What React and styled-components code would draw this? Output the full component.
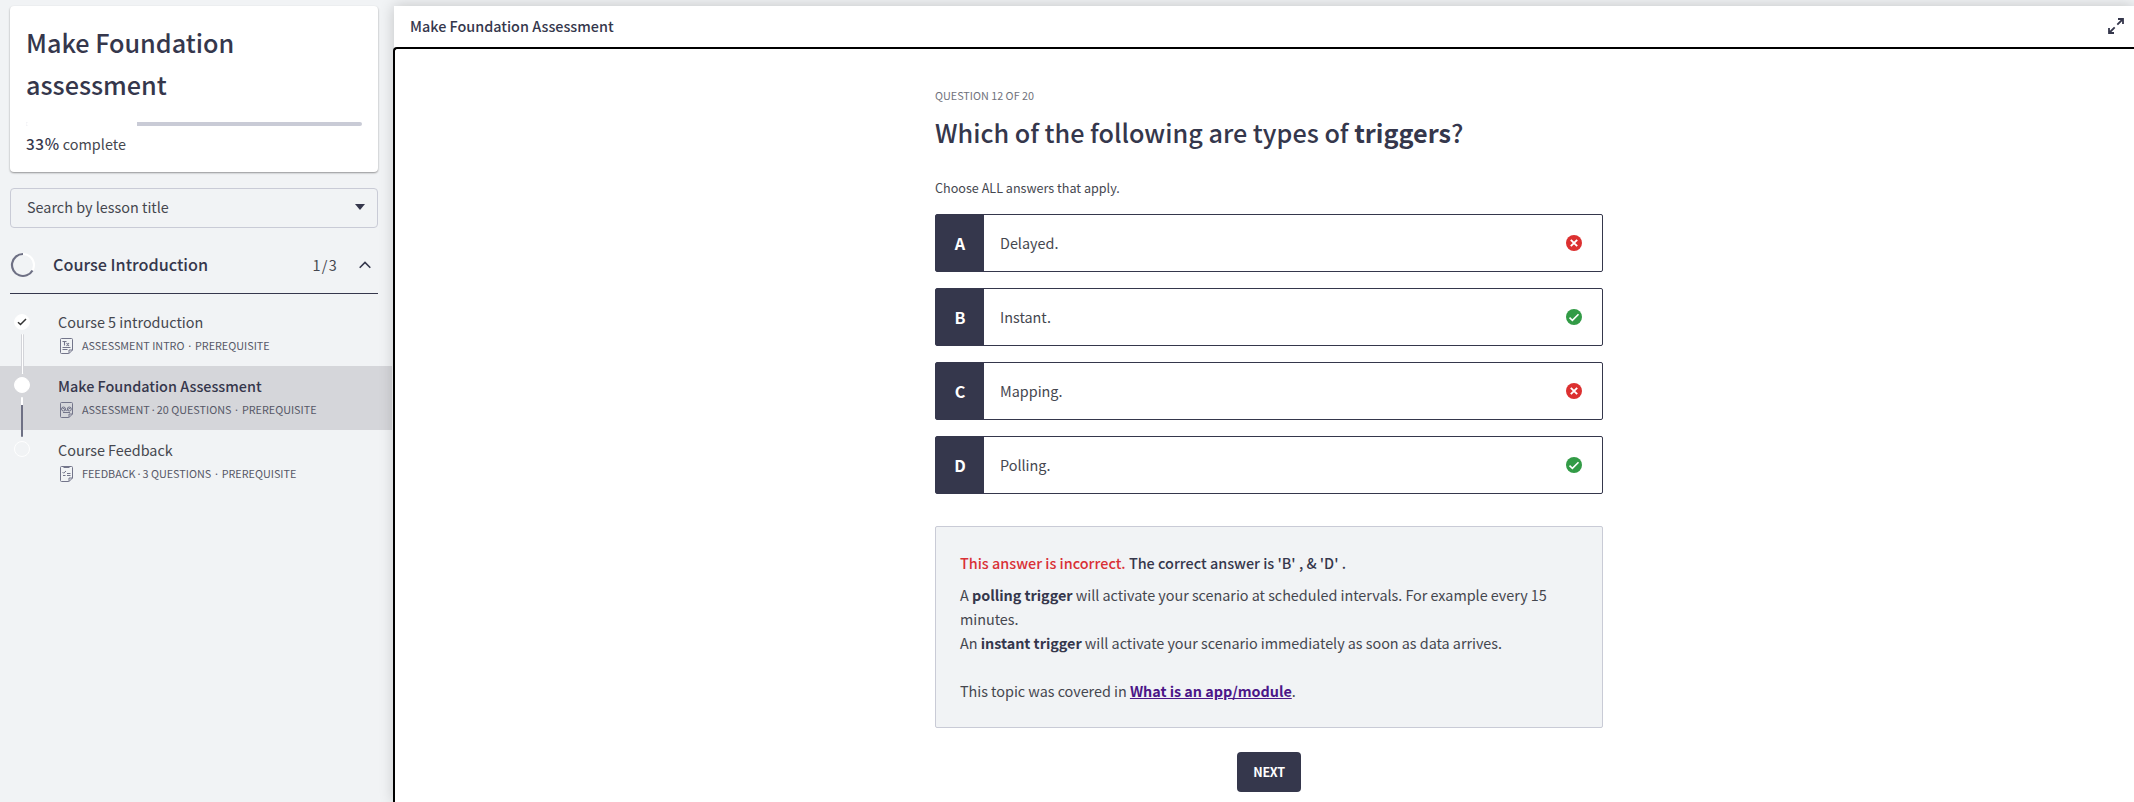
import React from "react";
import styled, { createGlobalStyle, css } from "styled-components";

const ink = "#35374c";
const body = "#45474f";
const line = "#c9cbd6";
const panel = "#f1f3f5";

const GlobalStyle = createGlobalStyle`
  * { box-sizing: border-box; }
  body {
    margin: 0;
    background: ${panel};
    color: ${body};
    font-family: "Noto Sans CJK JP", "Noto Sans", sans-serif;
    font-size: 14.4px;
    line-height: 24px;
    overflow: hidden;
  }
  h1, h2, p { margin: 0; }
`;

const Page = styled.div`
  display: flex;
  height: 802px;
  overflow: hidden;
`;

/* Sidebar */
const Sidebar = styled.aside`
  flex: 0 0 394px;
  padding-top: 6px;
`;

const CourseCard = styled.section`
  height: 166px;
  margin: 0 16px 0 10px;
  padding: 15px 16px 0 16px;
  background: #fff;
  border-radius: 4px;
  box-shadow: 0 1px 2px rgba(0, 0, 0, 0.4);
`;

const CourseTitle = styled.h1`
  width: 260px;
  font-size: 25.2px;
  line-height: 42px;
  font-weight: 500;
  color: ${ink};
`;

const Track = styled.div`
  width: 336px;
  height: 4px;
  margin-top: 17px;
  border-radius: 2px;
  background: ${line};
`;

const TrackFill = styled.div`
  width: 33%;
  height: 4px;
  border-radius: 2px 0 0 2px;
  background: #fff;
`;

const ProgressText = styled.p`
  margin-top: 5px;
  strong {
    font-size: 15.3px;
    font-weight: 500;
    letter-spacing: 0.6px;
    color: ${ink};
  }
`;

const SearchSelect = styled.div`
  display: flex;
  align-items: center;
  justify-content: space-between;
  height: 40px;
  margin: 16px 16px 0 10px;
  padding: 0 12px 2px 16px;
  border: 1px solid ${line};
  border-radius: 4px;
`;

const SectionHeader = styled.header`
  display: flex;
  align-items: center;
  height: 57px;
  margin: 9px 16px 0 10px;
  padding-right: 7px;
  border-bottom: 1px solid ${ink};
`;

const SectionTitle = styled.h2`
  flex: 1;
  margin: 0 0 2px 17px;
  font-size: 16.2px;
  font-weight: 500;
  color: ${ink};
`;

const SectionCount = styled.span`
  margin-right: 21px;
  letter-spacing: 1.3px;
`;

const LessonList = styled.div`
  margin-top: 8px;
`;

const LessonRow = styled.div`
  display: flex;
  height: 64px;
  padding-left: 14px;
  width: 392px;
  background: ${(p) => (p.$active ? "#d5d6da" : "transparent")};
`;

const Rail = styled.div`
  display: flex;
  flex-direction: column;
  align-items: flex-start;
  width: 16px;
  height: 64px;
  padding-top: ${(p) => (p.$first ? 12 : 11)}px;
`;

const Marker = styled.span`
  display: flex;
  flex: 0 0 16px;
  align-items: center;
  justify-content: center;
  width: 16px;
  height: 16px;
  border: 1px solid #fff;
  border-radius: 50%;
  background: ${(p) => (p.$filled ? "#fff" : "transparent")};
`;

const Connector = styled.span`
  position: relative;
  z-index: 1;
  flex: 0 0 40px;
  width: 3px;
  margin: 4px 0 0 7px;
  border-radius: 1px;
  ${(p) =>
    p.$done
      ? css`
          background: #fff;
          border: solid #d3d4d9;
          border-width: 0 1px;
        `
      : css`
          background: linear-gradient(#fff 8px, #6e7084 8px);
          width: 2px;
        `}
`;

const LessonText = styled.div`
  padding: 8px 0 0 28px;
`;

const LessonTitle = styled.div`
  font-weight: ${(p) => (p.$active ? 500 : 400)};
  color: ${(p) => (p.$active ? ink : body)};
`;

const LessonMeta = styled.div`
  display: flex;
  align-items: center;
  height: 16px;
  margin-top: 4px;
  padding-left: 2px;
  font-size: 10.8px;
  line-height: 16px;
  color: #565867;
`;

const MetaText = styled.span`
  margin-bottom: 2px;
`;

const Dot = styled.span`
  display: flex;
  justify-content: center;
  width: ${(p) => (p.$wide ? 10.5 : 7)}px;
  margin-bottom: 2px;
`;

/* Main area */
const Main = styled.main`
  position: relative;
  flex: 1;
  display: flex;
  flex-direction: column;
  margin-top: 6px;
  box-shadow: 0 0 14px rgba(0, 0, 0, 0.2);
  background: #fff;
`;

const TopBar = styled.header`
  display: flex;
  align-items: center;
  justify-content: space-between;
  height: 41px;
  padding: 0 10px 1px 16px;
  font-weight: 500;
  color: ${ink};
`;

const Frame = styled.section`
  flex: 1;
  display: flex;
  justify-content: center;
  margin-left: -1px;
  border: solid #000;
  border-width: 2px 0 0 2px;
  border-radius: 4px 0 0 0;
  background: #fff;
`;

const Quiz = styled.div`
  display: flex;
  flex-direction: column;
  width: 668px;
  margin-left: 9px;
  padding-top: 38px;
`;

const Counter = styled.p`
  font-size: 10.8px;
  line-height: 16px;
  color: #70727c;
`;

const Question = styled.h2`
  margin-top: 8px;
  font-size: 25.2px;
  line-height: 42px;
  font-weight: 500;
  color: ${ink};
`;

const Hint = styled.p`
  margin-top: 23px;
  font-size: 12.6px;
  line-height: 24px;
`;

const Answers = styled.div`
  display: flex;
  flex-direction: column;
  gap: 16px;
  margin-top: 14px;
`;

const Answer = styled.div`
  display: flex;
  align-items: center;
  height: 58px;
  padding-right: 20px;
  border: 1px solid ${ink};
  border-radius: 2px;
`;

const Letter = styled.span`
  display: flex;
  align-items: center;
  justify-content: center;
  align-self: stretch;
  width: 48px;
  background: ${ink};
  color: #fff;
  font-size: 16.2px;
  font-weight: 700;
`;

const AnswerText = styled.span`
  flex: 1;
  padding-left: 16px;
`;

const Feedback = styled.section`
  height: 202px;
  margin-top: 32px;
  padding: 24px;
  border: 1px solid ${line};
  border-radius: 2px;
  background: ${panel};
  letter-spacing: -0.03px;
  strong {
    font-weight: 700;
    color: ${ink};
  }
`;

const Verdict = styled.p`
  margin-bottom: 8px;
  font-weight: 500;
  letter-spacing: 0;
  color: ${ink};
`;

const Wrong = styled.span`
  color: #d93036;
`;

const Blank = styled.div`
  height: 24px;
`;

const TopicLink = styled.a`
  font-weight: 700;
  color: #4b1688;
  text-decoration: underline;
`;

const NextButton = styled.button`
  align-self: center;
  width: 64px;
  height: 40px;
  margin-top: 24px;
  padding: 0 0 1px;
  border: 0;
  border-radius: 4px;
  background: ${ink};
  color: #fff;
  font-family: inherit;
  font-size: 12.6px;
  font-weight: 700;
  letter-spacing: -0.3px;
`;

const Icon = styled.svg`
  display: block;
  flex: none;
`;

const Caret = () => (
  <Icon width="10" height="6" viewBox="0 0 10 6">
    <path d="M0 0h10L5 6z" fill={ink} />
  </Icon>
);

const Ring = () => (
  <Icon width="26" height="26" viewBox="0 0 26 26" fill="none">
    <circle cx="13" cy="13" r="11" stroke="#fff" strokeWidth="2" />
    <path d="M13 2a11 11 0 1 0 9.500 16.500" stroke="#6e7084" strokeWidth="2.200" />
  </Icon>
);

const ChevronUp = () => (
  <Icon width="12" height="8" viewBox="0 0 12 8">
    <path d="M.7 6.8 6 1.500l5.300 5.300" fill="none" stroke={ink} strokeWidth="1.600" />
  </Icon>
);

const Tick = () => (
  <Icon width="10" height="8" viewBox="0 0 10 8">
    <path d="M1 4.200 3.500 6.500 9 1" fill="none" stroke="#333" strokeWidth="1.500" />
  </Icon>
);

const Expand = () => (
  <Icon width="16" height="16" viewBox="0 0 16 16" fill="none" stroke={ink} strokeWidth="1.800">
    <path d="M10 1h5v5M15 1 9.300 6.700M6 15H1v-5M1 15l5.700-5.700" />
  </Icon>
);

const Result = ({ ok }) => (
  <Icon width="16" height="16" viewBox="0 0 16 16">
    <circle cx="8" cy="8" r="8" fill={ok ? "#329b46" : "#dc3030"} />
    <path
      d={ok ? "M3.500 8.600 6.400 11.300 12.500 5.200" : "m4.800 4.800 6.400 6.400m0-6.400-6.400 6.400"}
      fill="none"
      stroke="#fff"
      strokeWidth={ok ? 1.6 : 1.9}
    />
  </Icon>
);

const sheet = "M8.500 15.500h-7a1 1 0 0 1-1-1v-13a1 1 0 0 1 1-1h10a1 1 0 0 1 1 1v10.500l-3.500 3.500zM9 15.500v-3.500h3.500";

const marks = {
  intro: (
    <>
      <path d="M2.500 3.500h4M4.500 3.500v4M6.500 5l2.500 3M9 5 6.500 8" strokeWidth="1.100" />
      <path d="M2.500 9.500h8M2.500 11.500h5" />
    </>
  ),
  quiz: (
    <>
      <circle cx="3.500" cy="7" r="2" />
      <circle cx="9.300" cy="7" r="2" />
      <path d="M2 5.500 6.400 8.500 11 5.500M3 10.500h7" />
    </>
  ),
  feedback: (
    <>
      <path d="M3.500 1h6" strokeWidth="2" />
      <path d="m2.500 6 1.200 1.200L6 5M7 7.500h3.500M3 9.500h2.500M7 9.500h3.500" />
    </>
  ),
};

const DocSvg = styled(Icon)`
  margin-right: 9px;
`;

const DocIcon = ({ kind }) => (
  <DocSvg width="13" height="16" viewBox="0 0 13 16" fill="none" stroke="#73758a" strokeWidth="1">
    <path d={sheet} />
    {marks[kind]}
  </DocSvg>
);

const lessons = [
  { title: "Course 5 introduction", meta: ["ASSESSMENT INTRO"], kind: "intro", done: true },
  { title: "Make Foundation Assessment", meta: ["ASSESSMENT", "20 QUESTIONS"], kind: "quiz", active: true },
  { title: "Course Feedback", meta: ["FEEDBACK", "3 QUESTIONS"], kind: "feedback" },
];

const answers = [
  { letter: "A", text: "Delayed.", ok: false },
  { letter: "B", text: "Instant.", ok: true },
  { letter: "C", text: "Mapping.", ok: false },
  { letter: "D", text: "Polling.", ok: true },
];

export default function App() {
  return (
    <Page>
      <GlobalStyle />
      <Sidebar>
        <CourseCard>
          <CourseTitle>Make Foundation assessment</CourseTitle>
          <Track>
            <TrackFill />
          </Track>
          <ProgressText>
            <strong>33%</strong> complete
          </ProgressText>
        </CourseCard>
        <SearchSelect>
          Search by lesson title
          <Caret />
        </SearchSelect>
        <SectionHeader>
          <Ring />
          <SectionTitle>Course Introduction</SectionTitle>
          <SectionCount>1/3</SectionCount>
          <ChevronUp />
        </SectionHeader>
        <LessonList>
          {lessons.map((l, i) => (
            <LessonRow key={l.title} $active={l.active}>
              <Rail $first={i === 0}>
                <Marker $filled={l.done || l.active}>{l.done && <Tick />}</Marker>
                {i < lessons.length - 1 && <Connector $done={l.done} />}
              </Rail>
              <LessonText>
                <LessonTitle $active={l.active}>{l.title}</LessonTitle>
                <LessonMeta>
                  <DocIcon kind={l.kind} />
                  {l.meta.map((m, n) => (
                    <React.Fragment key={m}>
                      {n > 0 && <Dot>·</Dot>}
                      <MetaText>{m}</MetaText>
                    </React.Fragment>
                  ))}
                  <Dot $wide>·</Dot>
                  <MetaText>PREREQUISITE</MetaText>
                </LessonMeta>
              </LessonText>
            </LessonRow>
          ))}
        </LessonList>
      </Sidebar>
      <Main>
        <TopBar>
          Make Foundation Assessment
          <Expand />
        </TopBar>
        <Frame>
          <Quiz>
            <Counter>QUESTION 12 OF 20</Counter>
            <Question>
              Which of the following are types of <b>triggers</b>?
            </Question>
            <Hint>Choose ALL answers that apply.</Hint>
            <Answers>
              {answers.map((a) => (
                <Answer key={a.letter}>
                  <Letter>{a.letter}</Letter>
                  <AnswerText>{a.text}</AnswerText>
                  <Result ok={a.ok} />
                </Answer>
              ))}
            </Answers>
            <Feedback>
              <Verdict>
                <Wrong>This answer is incorrect.</Wrong> The correct answer is 'B' , &amp; 'D' .
              </Verdict>
              <p>
                A <strong>polling trigger</strong> will activate your scenario at scheduled intervals. For example
                every 15 minutes.
              </p>
              <p>
                An <strong>instant trigger</strong> will activate your scenario immediately as soon as data arrives.
              </p>
              <Blank />
              <p>
                This topic was covered in <TopicLink>What is an app/module</TopicLink>.
              </p>
            </Feedback>
            <NextButton>NEXT</NextButton>
          </Quiz>
        </Frame>
      </Main>
    </Page>
  );
}
